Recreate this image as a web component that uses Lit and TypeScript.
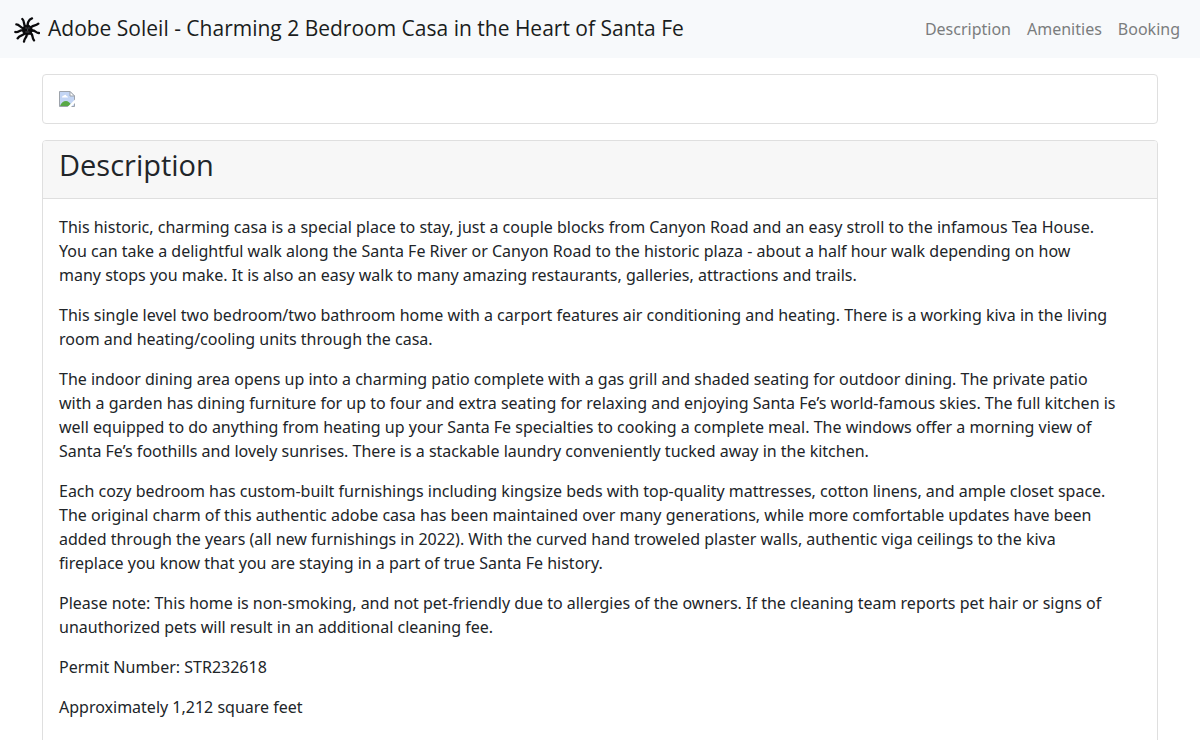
import { LitElement, html, css } from "lit";
import { customElement } from "lit/decorators.js";

const paragraphs = [
  `This historic, charming casa is a special place to stay, just a couple blocks from Canyon Road and an easy stroll to the infamous Tea House.
You can take a delightful walk along the Santa Fe River or Canyon Road to the historic plaza - about a half hour walk depending on how
many stops you make. It is also an easy walk to many amazing restaurants, galleries, attractions and trails.`,
  `This single level two bedroom/two bathroom home with a carport features air conditioning and heating. There is a working kiva in the living
room and heating/cooling units through the casa.`,
  `The indoor dining area opens up into a charming patio complete with a gas grill and shaded seating for outdoor dining. The private patio
with a garden has dining furniture for up to four and extra seating for relaxing and enjoying Santa Fe’s world-famous skies. The full kitchen is
well equipped to do anything from heating up your Santa Fe specialties to cooking a complete meal. The windows offer a morning view of
Santa Fe’s foothills and lovely sunrises. There is a stackable laundry conveniently tucked away in the kitchen.`,
  `Each cozy bedroom has custom-built furnishings including kingsize beds with top-quality mattresses, cotton linens, and ample closet space.
The original charm of this authentic adobe casa has been maintained over many generations, while more comfortable updates have been
added through the years (all new furnishings in 2022). With the curved hand troweled plaster walls, authentic viga ceilings to the kiva
fireplace you know that you are staying in a part of true Santa Fe history.`,
  `Please note: This home is non-smoking, and not pet-friendly due to allergies of the owners. If the cleaning team reports pet hair or signs of
unauthorized pets will result in an additional cleaning fee.`,
  "Permit Number: STR232618",
  "Approximately 1,212 square feet",
];

const links = ["Description", "Amenities", "Booking"];

@customElement("app-root")
export class AppRoot extends LitElement {
  static styles = css`
    :host {
      display: block;
      font-family: "Noto Sans", "Open Sans", sans-serif;
      font-size: 16px;
      line-height: 24px;
      color: #212529;
      background: #fff;
    }
    .navbar {
      display: flex;
      align-items: center;
      justify-content: space-between;
      height: 58px;
      padding: 0 20px 0 14px;
      background: #f7f9fb;
    }
    .brand {
      display: flex;
      align-items: center;
      gap: 8px;
      font-family: "Open Sans", "Noto Sans", sans-serif;
      font-size: 21px;
      color: #1a1d20;
      text-decoration: none;
    }
    .name {
      padding-bottom: 2px;
    }
    .sun {
      display: block;
      width: 26px;
      height: 26px;
      margin-top: 2px;
    }
    .links {
      display: flex;
      gap: 16px;
    }
    .link {
      color: #7b7d7e;
      text-decoration: none;
    }
    .container {
      display: flex;
      flex-direction: column;
      gap: 16px;
      box-sizing: border-box;
      max-width: 1140px;
      margin: 0 auto;
      padding: 16px 12px;
    }
    .card {
      border: 1px solid #dfdfdf;
      border-radius: 4px;
      overflow: hidden;
    }
    .body {
      padding: 16px;
    }
    .broken {
      display: block;
      width: 16px;
      height: 16px;
    }
    .head {
      padding: 7px 16px 16px;
      background: #f7f7f7;
      border-bottom: 1px solid #dfdfdf;
    }
    .title {
      margin: 0;
      font-family: "Open Sans", "Noto Sans", sans-serif;
      font-size: 29px;
      font-weight: 400;
      line-height: 34px;
    }
    .text {
      margin: 0 0 16px;
      white-space: pre-line;
    }
  `;

  render() {
    return html`
      <nav class="navbar">
        <a class="brand" href="#">
          <svg class="sun" viewBox="0 0 78 78" fill="none" stroke="#0a0a0c" stroke-width="7" stroke-linecap="round" stroke-linejoin="round" aria-hidden="true">
            <path d="M36 32C26 24 34 14 25 6M43 31C38 20 44 7 54 4M50 34C52 24 63 28 73 20M52 42C60 35 66 49 75 48M47 48C60 51 52 62 60 70M38 50C40 62 31 62 30 74M32 47C30 58 18 52 11 64M28 40C20 36 14 48 4 45M30 34C18 34 18 22 7 22" />
            <circle cx="40" cy="39" r="15" fill="#0a0a0c" stroke-width="2" />
            <path d="M35 33h4M43 33h3M41 36v5M35 45h10" stroke="#6b6d70" stroke-width="2" />
          </svg>
          <span class="name">Adobe Soleil - Charming 2 Bedroom Casa in the Heart of Santa Fe</span>
        </a>
        <div class="links">
          ${links.map((l) => html`<a class="link" href="#${l.toLowerCase()}">${l}</a>`)}
        </div>
      </nav>
      <main class="container">
        <section class="card">
          <div class="body">
            <svg class="broken" viewBox="0 0 16 16" role="img" aria-label="Photo">
              <path d="M.5.5H11L15.5 5V15.5H.5Z" fill="#c3d5f4" stroke="#9da3ab" />
              <path d="M3 6.500Q3 4.500 5 4.500Q6.500 3 7.500 5Q9 5 9 6.500Z" fill="#fff" />
              <path d="M1 15Q3 10 7 10Q10 10 13 15Z" fill="#58a846" />
              <path d="M11 .5V5H15.500Z" fill="#fff" stroke="#9da3ab" />
              <path d="M16 8.500V12L12 16H8.500Z" fill="#fff" />
            </svg>
          </div>
        </section>
        <section class="card" id="description">
          <header class="head"><h2 class="title">Description</h2></header>
          <div class="body">${paragraphs.map((p) => html`<p class="text">${p}</p>`)}</div>
        </section>
      </main>
    `;
  }
}
